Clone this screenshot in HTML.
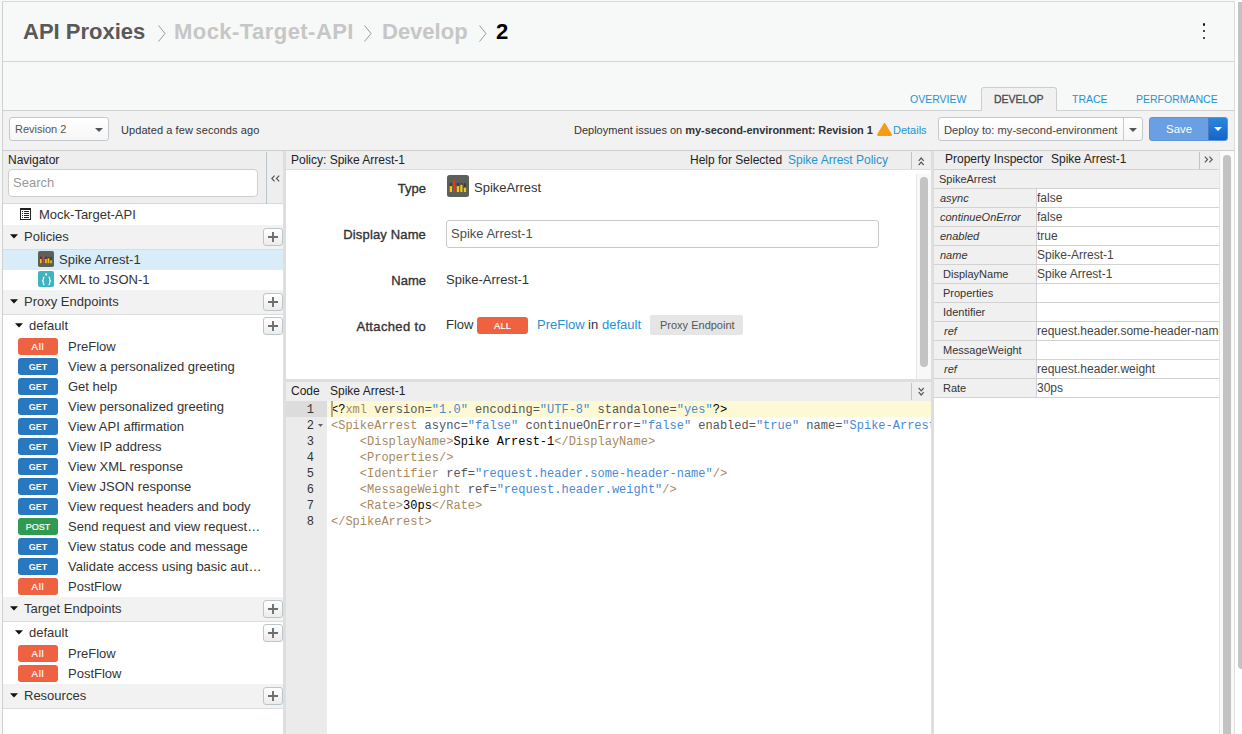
<!DOCTYPE html>
<html><head><meta charset="utf-8"><style>
*{box-sizing:border-box;margin:0;padding:0}
html,body{width:1242px;height:734px;overflow:hidden;background:#fff;font-family:"Liberation Sans",sans-serif;color:#333;position:relative}
.a{position:absolute}
.t{white-space:nowrap}
.plus{width:20px;height:18px;border:1px solid #b9c6cd;border-radius:3px;background:linear-gradient(#fff,#ececec)}
.badge{position:absolute;width:40px;height:17px;border-radius:3px;color:#fff;text-align:center;white-space:nowrap}
.mono{font-family:"Liberation Mono",monospace}
</style></head><body>
<div class="a" style="left:0px;top:0px;width:2px;height:734px;background:#f6f8f8"></div>
<div class="a" style="left:0px;top:0px;width:1238px;height:1px;background:#f8f9f9"></div>
<div class="a" style="left:2px;top:1px;width:1233px;height:733px;border-top:1px solid #d6d8d8;border-left:1px solid #cfd1d1;border-right:1px solid #dcdcdc"></div>
<div class="a" style="left:1238px;top:2px;width:4px;height:667px;background:#c3c3c3;border-radius:0 0 0 4px"></div>
<div class="a" style="left:3px;top:2px;width:1231px;height:60px;background:#f7f8f8;border-bottom:1px solid #d4d6d6"></div>
<div class="a t" style="left:23px;top:16.88px;font-size:22px;line-height:29px;color:#595959;font-weight:bold;font-style:normal;">API Proxies</div>
<svg class="a" style="left:158px;top:25px" width="8" height="17" viewBox="0 0 8 17"><path d="M0.5 0.5 L7 8.5 L0.5 16.5" fill="none" stroke="#9a9a9a" stroke-width="1"/></svg>
<div class="a t" style="left:174px;top:16.88px;font-size:22px;line-height:29px;color:#c6c6c6;font-weight:bold;font-style:normal;letter-spacing:0.45px">Mock-Target-API</div>
<svg class="a" style="left:364px;top:25px" width="8" height="17" viewBox="0 0 8 17"><path d="M0.5 0.5 L7 8.5 L0.5 16.5" fill="none" stroke="#9a9a9a" stroke-width="1"/></svg>
<div class="a t" style="left:382px;top:16.88px;font-size:22px;line-height:29px;color:#c6c6c6;font-weight:bold;font-style:normal;">Develop</div>
<svg class="a" style="left:479px;top:25px" width="8" height="17" viewBox="0 0 8 17"><path d="M0.5 0.5 L7 8.5 L0.5 16.5" fill="none" stroke="#9a9a9a" stroke-width="1"/></svg>
<div class="a t" style="left:496px;top:16.88px;font-size:22px;line-height:29px;color:#000;font-weight:bold;font-style:normal;">2</div>
<div class="a" style="left:1202.8px;top:23.1px;width:2.7px;height:2.7px;border-radius:50%;background:#111"></div>
<div class="a" style="left:1202.8px;top:29.8px;width:2.7px;height:2.7px;border-radius:50%;background:#111"></div>
<div class="a" style="left:1202.8px;top:36.5px;width:2.7px;height:2.7px;border-radius:50%;background:#111"></div>
<div class="a" style="left:3px;top:62px;width:1231px;height:49px;background:#f7f8f8;border-bottom:1px solid #cfd1d1"></div>
<div class="a t" style="left:910px;top:92.36px;font-size:10.5px;line-height:14px;color:#2394d3;font-weight:normal;font-style:normal;">OVERVIEW</div>
<div class="a" style="left:981px;top:87px;width:76px;height:24px;background:#f1f1f1;border:1px solid #cdcdcd;border-bottom:none;border-radius:3px 3px 0 0"></div>
<div class="a t" style="left:994px;top:92.36px;font-size:10.5px;line-height:14px;color:#4a4a4a;font-weight:normal;font-style:normal;-webkit-text-stroke:0.3px #4a4a4a">DEVELOP</div>
<div class="a t" style="left:1072px;top:92.36px;font-size:10.5px;line-height:14px;color:#2394d3;font-weight:normal;font-style:normal;">TRACE</div>
<div class="a t" style="left:1136px;top:92.36px;font-size:10.5px;line-height:14px;color:#2394d3;font-weight:normal;font-style:normal;">PERFORMANCE</div>
<div class="a" style="left:3px;top:111px;width:1231px;height:40px;background:#f2f2f2;border-bottom:1px solid #cdcdcd"></div>
<div class="a" style="left:9px;top:117px;width:100px;height:24px;background:linear-gradient(#fff,#f6f6f6);border:1px solid #c3c9cc;border-radius:3px"></div>
<div class="a t" style="left:15px;top:122.19px;font-size:11px;line-height:14px;color:#555;font-weight:normal;font-style:normal;">Revision 2</div>
<svg class="a" style="left:95px;top:128px" width="8" height="4" viewBox="0 0 8 4"><path d="M0 0 L8 0 L4.0 4 Z" fill="#555"/></svg>
<div class="a t" style="left:121px;top:123.19px;font-size:11px;line-height:14px;color:#333;font-weight:normal;font-style:normal;letter-spacing:0.08px">Updated a few seconds ago</div>
<div class="a t" style="left:574px;top:123.19px;font-size:11px;line-height:14px;color:#333;font-weight:normal;font-style:normal;">Deployment issues on <b style="letter-spacing:-0.06px">my-second-environment: Revision 1</b></div>
<svg class="a" style="left:876.5px;top:122.5px" width="15" height="13" viewBox="0 0 15 13"><path d="M7.5 1.2 L13.8 11.8 L1.2 11.8 Z" fill="#f69b14" stroke="#f69b14" stroke-width="2.2" stroke-linejoin="round"/></svg>
<div class="a t" style="left:893px;top:123.19px;font-size:11px;line-height:14px;color:#2394d3;font-weight:normal;font-style:normal;">Details</div>
<div class="a" style="left:938px;top:117px;width:205px;height:24px;background:linear-gradient(#fff,#f6f6f6);border:1px solid #c3c9cc;border-radius:3px"></div>
<div class="a t" style="left:944px;top:122.62px;font-size:11.2px;line-height:15px;color:#444;font-weight:normal;font-style:normal;">Deploy to: my-second-environment</div>
<div class="a" style="left:1123px;top:118px;width:1px;height:22px;background:#c9c9c9"></div>
<svg class="a" style="left:1129px;top:128px" width="8" height="4" viewBox="0 0 8 4"><path d="M0 0 L8 0 L4.0 4 Z" fill="#555"/></svg>
<div class="a" style="left:1149px;top:117px;width:79px;height:24px;border-radius:3px;background:#6b9fe3;border:1px solid #5f93d6"></div>
<div class="a" style="left:1208px;top:118px;width:19px;height:22px;background:linear-gradient(#2a86e0,#1565c8);border-left:1px solid #4b7cc0;border-radius:0 2px 2px 0"></div>
<div class="a t" style="left:1166px;top:121.52px;font-size:11.5px;line-height:15px;color:#fff;font-weight:normal;font-style:normal;">Save</div>
<svg class="a" style="left:1214px;top:127px" width="8" height="4" viewBox="0 0 8 4"><path d="M0 0 L8 0 L4.0 4 Z" fill="#fff"/></svg>
<div class="a" style="left:283px;top:151px;width:3px;height:583px;background:#dedede"></div>
<div class="a" style="left:931px;top:151px;width:3px;height:583px;background:#dedede"></div>
<div class="a" style="left:3px;top:151px;width:280px;height:53px;background:#eeeeee;border-bottom:1px solid #d9d9d9"></div>
<div class="a t" style="left:8px;top:151.84px;font-size:12px;line-height:16px;color:#222;font-weight:normal;font-style:normal;">Navigator</div>
<div class="a" style="left:8px;top:169px;width:250px;height:28px;background:#fff;border:1px solid #cfcfcf;border-radius:4px"></div>
<div class="a t" style="left:13px;top:174.00px;font-size:13px;line-height:17px;color:#999;font-weight:normal;font-style:normal;">Search</div>
<div class="a" style="left:266px;top:152px;width:1px;height:52px;background:#b9c6cd"></div>
<svg class="a" style="left:270.5px;top:174.5px" width="9" height="7" viewBox="0 0 9 7"><path d="M3.6 0.6 L0.8 3.5 L3.6 6.4 M8.2 0.6 L5.4 3.5 L8.2 6.4" fill="none" stroke="#555" stroke-width="1.15"/></svg>
<svg class="a" style="left:20px;top:208px" width="11" height="12" viewBox="0 0 11 12"><rect x="0.5" y="0.5" width="10" height="11" fill="#fff" stroke="#222"/><rect x="0" y="0" width="11" height="2" fill="#222"/><path d="M2 3.5h1M4 3.5h5M2 5.5h1M4 5.5h5M2 7.5h1M4 7.5h5M2 9.5h1M4 9.5h5" stroke="#222" stroke-width="1"/></svg>
<div class="a t" style="left:39px;top:206.00px;font-size:13px;line-height:17px;color:#333;font-weight:normal;font-style:normal;">Mock-Target-API</div>
<div class="a" style="left:3px;top:225px;width:280px;height:25px;background:#f2f2f2;border-bottom:1px solid #dcdcdc"></div>
<svg class="a" style="left:10px;top:234px" width="8" height="5" viewBox="0 0 8 5"><path d="M0 0.2 L8 0.2 L4 4.6 Z" fill="#111"/></svg>
<div class="a t" style="left:24px;top:228.00px;font-size:13px;line-height:17px;color:#333;font-weight:normal;font-style:normal;">Policies</div>
<div class="a plus" style="left:263px;top:228px"><svg width="20" height="18" viewBox="0 0 20 18" style="position:absolute;left:-1px;top:-1px"><path d="M5 9 H15 M10 4 V14" stroke="#6e6e6e" stroke-width="1.9"/></svg></div>
<div class="a" style="left:3px;top:250px;width:280px;height:20px;background:#d8edf8"></div>
<svg class="a" style="left:38px;top:251px" width="16" height="16" viewBox="0 0 22 22"><rect x="0" y="0" width="22" height="22" rx="2.5" fill="#5b6158"/><rect x="2.7" y="7.7" width="2.3" height="9.3" rx="1" fill="#3b3f3c"/><rect x="2.7" y="10.9" width="2.3" height="6.1" rx="0.6" fill="#f7c51e"/><rect x="6.2" y="4.3" width="2.3" height="12.7" rx="1" fill="#3b3f3c"/><rect x="6.2" y="4.3" width="2.3" height="12.7" rx="0.6" fill="#ee3a16"/><rect x="9.8" y="7.7" width="2.3" height="9.3" rx="1" fill="#3b3f3c"/><rect x="9.8" y="10.9" width="2.3" height="6.1" rx="0.6" fill="#f7c51e"/><rect x="13.2" y="8" width="2.3" height="9" rx="1" fill="#3b3f3c"/><rect x="13.2" y="9.8" width="2.3" height="7.199999999999999" rx="0.6" fill="#f7c51e"/><rect x="16.8" y="7.9" width="2.3" height="9.1" rx="1" fill="#3b3f3c"/><rect x="16.8" y="12.6" width="2.3" height="4.4" rx="0.6" fill="#f7c51e"/></svg>
<div class="a t" style="left:59px;top:251.00px;font-size:13px;line-height:17px;color:#333;font-weight:normal;font-style:normal;">Spike Arrest-1</div>
<svg class="a" style="left:38px;top:271px" width="16" height="16" viewBox="0 0 16 16"><rect x="0" y="0" width="16" height="16" rx="2" fill="#3cb4c2"/><path d="M6.6 6 C5.2 6 5.2 6.5 5.2 7.8 V8.8 C5.2 9.3 4.7 9.6 4 9.6 C4.7 9.6 5.2 9.9 5.2 10.4 V12 C5.2 13.3 5.2 13.8 6.6 13.8 M10.4 6 C11.8 6 11.8 6.5 11.8 7.8 V8.8 C11.8 9.3 12.3 9.6 13 9.6 C12.3 9.6 11.8 9.9 11.8 10.4 V12 C11.8 13.3 11.8 13.8 10.4 13.8" fill="none" stroke="#fff" stroke-width="1.1"/><circle cx="8.2" cy="3.4" r="1.1" fill="#fff"/></svg>
<div class="a t" style="left:59px;top:271.00px;font-size:13px;line-height:17px;color:#333;font-weight:normal;font-style:normal;">XML to JSON-1</div>
<div class="a" style="left:3px;top:290px;width:280px;height:25px;background:#f2f2f2;border-bottom:1px solid #dcdcdc"></div>
<svg class="a" style="left:10px;top:299px" width="8" height="5" viewBox="0 0 8 5"><path d="M0 0.2 L8 0.2 L4 4.6 Z" fill="#111"/></svg>
<div class="a t" style="left:24px;top:293.00px;font-size:13px;line-height:17px;color:#333;font-weight:normal;font-style:normal;">Proxy Endpoints</div>
<div class="a plus" style="left:263px;top:293px"><svg width="20" height="18" viewBox="0 0 20 18" style="position:absolute;left:-1px;top:-1px"><path d="M5 9 H15 M10 4 V14" stroke="#6e6e6e" stroke-width="1.9"/></svg></div>
<svg class="a" style="left:15px;top:322.5px" width="8" height="5" viewBox="0 0 8 5"><path d="M0 0.2 L8 0.2 L4 4.6 Z" fill="#111"/></svg>
<div class="a t" style="left:29px;top:317.00px;font-size:13px;line-height:17px;color:#333;font-weight:normal;font-style:normal;">default</div>
<div class="a plus" style="left:263px;top:317px"><svg width="20" height="18" viewBox="0 0 20 18" style="position:absolute;left:-1px;top:-1px"><path d="M5 9 H15 M10 4 V14" stroke="#6e6e6e" stroke-width="1.9"/></svg></div>
<div class="badge" style="left:18px;top:338px;background:#ee6242;font-size:9.5px;line-height:17px;font-weight:normal;letter-spacing:0.8px;-webkit-text-stroke:0.2px #fff">All</div>
<div class="a t" style="left:68px;top:338.00px;font-size:13px;line-height:17px;color:#333;font-weight:normal;font-style:normal;">PreFlow</div>
<div class="badge" style="left:18px;top:358px;background:#2877bf;font-size:9px;line-height:18px;font-weight:bold;letter-spacing:0px;-webkit-text-stroke:0px #fff">GET</div>
<div class="a t" style="left:68px;top:358.00px;font-size:13px;line-height:17px;color:#333;font-weight:normal;font-style:normal;">View a personalized greeting</div>
<div class="badge" style="left:18px;top:378px;background:#2877bf;font-size:9px;line-height:18px;font-weight:bold;letter-spacing:0px;-webkit-text-stroke:0px #fff">GET</div>
<div class="a t" style="left:68px;top:378.00px;font-size:13px;line-height:17px;color:#333;font-weight:normal;font-style:normal;">Get help</div>
<div class="badge" style="left:18px;top:398px;background:#2877bf;font-size:9px;line-height:18px;font-weight:bold;letter-spacing:0px;-webkit-text-stroke:0px #fff">GET</div>
<div class="a t" style="left:68px;top:398.00px;font-size:13px;line-height:17px;color:#333;font-weight:normal;font-style:normal;">View personalized greeting</div>
<div class="badge" style="left:18px;top:418px;background:#2877bf;font-size:9px;line-height:18px;font-weight:bold;letter-spacing:0px;-webkit-text-stroke:0px #fff">GET</div>
<div class="a t" style="left:68px;top:418.00px;font-size:13px;line-height:17px;color:#333;font-weight:normal;font-style:normal;">View API affirmation</div>
<div class="badge" style="left:18px;top:438px;background:#2877bf;font-size:9px;line-height:18px;font-weight:bold;letter-spacing:0px;-webkit-text-stroke:0px #fff">GET</div>
<div class="a t" style="left:68px;top:438.00px;font-size:13px;line-height:17px;color:#333;font-weight:normal;font-style:normal;">View IP address</div>
<div class="badge" style="left:18px;top:458px;background:#2877bf;font-size:9px;line-height:18px;font-weight:bold;letter-spacing:0px;-webkit-text-stroke:0px #fff">GET</div>
<div class="a t" style="left:68px;top:458.00px;font-size:13px;line-height:17px;color:#333;font-weight:normal;font-style:normal;">View XML response</div>
<div class="badge" style="left:18px;top:478px;background:#2877bf;font-size:9px;line-height:18px;font-weight:bold;letter-spacing:0px;-webkit-text-stroke:0px #fff">GET</div>
<div class="a t" style="left:68px;top:478.00px;font-size:13px;line-height:17px;color:#333;font-weight:normal;font-style:normal;">View JSON response</div>
<div class="badge" style="left:18px;top:498px;background:#2877bf;font-size:9px;line-height:18px;font-weight:bold;letter-spacing:0px;-webkit-text-stroke:0px #fff">GET</div>
<div class="a t" style="left:68px;top:498.00px;font-size:13px;line-height:17px;color:#333;font-weight:normal;font-style:normal;">View request headers and body</div>
<div class="badge" style="left:18px;top:518px;background:#2f9b50;font-size:9px;line-height:18px;font-weight:normal;letter-spacing:0px;-webkit-text-stroke:0.2px #fff">POST</div>
<div class="a t" style="left:68px;top:518.00px;font-size:13px;line-height:17px;color:#333;font-weight:normal;font-style:normal;">Send request and view request…</div>
<div class="badge" style="left:18px;top:538px;background:#2877bf;font-size:9px;line-height:18px;font-weight:bold;letter-spacing:0px;-webkit-text-stroke:0px #fff">GET</div>
<div class="a t" style="left:68px;top:538.00px;font-size:13px;line-height:17px;color:#333;font-weight:normal;font-style:normal;">View status code and message</div>
<div class="badge" style="left:18px;top:558px;background:#2877bf;font-size:9px;line-height:18px;font-weight:bold;letter-spacing:0px;-webkit-text-stroke:0px #fff">GET</div>
<div class="a t" style="left:68px;top:558.00px;font-size:13px;line-height:17px;color:#333;font-weight:normal;font-style:normal;">Validate access using basic aut…</div>
<div class="badge" style="left:18px;top:578px;background:#ee6242;font-size:9.5px;line-height:17px;font-weight:normal;letter-spacing:0.8px;-webkit-text-stroke:0.2px #fff">All</div>
<div class="a t" style="left:68px;top:578.00px;font-size:13px;line-height:17px;color:#333;font-weight:normal;font-style:normal;">PostFlow</div>
<div class="a" style="left:3px;top:597px;width:280px;height:25px;background:#f2f2f2;border-bottom:1px solid #dcdcdc"></div>
<svg class="a" style="left:10px;top:606px" width="8" height="5" viewBox="0 0 8 5"><path d="M0 0.2 L8 0.2 L4 4.6 Z" fill="#111"/></svg>
<div class="a t" style="left:24px;top:600.00px;font-size:13px;line-height:17px;color:#333;font-weight:normal;font-style:normal;">Target Endpoints</div>
<div class="a plus" style="left:263px;top:600px"><svg width="20" height="18" viewBox="0 0 20 18" style="position:absolute;left:-1px;top:-1px"><path d="M5 9 H15 M10 4 V14" stroke="#6e6e6e" stroke-width="1.9"/></svg></div>
<svg class="a" style="left:15px;top:629.5px" width="8" height="5" viewBox="0 0 8 5"><path d="M0 0.2 L8 0.2 L4 4.6 Z" fill="#111"/></svg>
<div class="a t" style="left:29px;top:624.00px;font-size:13px;line-height:17px;color:#333;font-weight:normal;font-style:normal;">default</div>
<div class="a plus" style="left:263px;top:624px"><svg width="20" height="18" viewBox="0 0 20 18" style="position:absolute;left:-1px;top:-1px"><path d="M5 9 H15 M10 4 V14" stroke="#6e6e6e" stroke-width="1.9"/></svg></div>
<div class="badge" style="left:18px;top:645px;background:#ee6242;font-size:9.5px;line-height:17px;font-weight:normal;letter-spacing:0.8px;-webkit-text-stroke:0.2px #fff">All</div>
<div class="a t" style="left:68px;top:645.00px;font-size:13px;line-height:17px;color:#333;font-weight:normal;font-style:normal;">PreFlow</div>
<div class="badge" style="left:18px;top:665px;background:#ee6242;font-size:9.5px;line-height:17px;font-weight:normal;letter-spacing:0.8px;-webkit-text-stroke:0.2px #fff">All</div>
<div class="a t" style="left:68px;top:665.00px;font-size:13px;line-height:17px;color:#333;font-weight:normal;font-style:normal;">PostFlow</div>
<div class="a" style="left:3px;top:684px;width:280px;height:25px;background:#f2f2f2;border-bottom:1px solid #dcdcdc"></div>
<svg class="a" style="left:10px;top:693px" width="8" height="5" viewBox="0 0 8 5"><path d="M0 0.2 L8 0.2 L4 4.6 Z" fill="#111"/></svg>
<div class="a t" style="left:24px;top:687.00px;font-size:13px;line-height:17px;color:#333;font-weight:normal;font-style:normal;">Resources</div>
<div class="a plus" style="left:263px;top:687px"><svg width="20" height="18" viewBox="0 0 20 18" style="position:absolute;left:-1px;top:-1px"><path d="M5 9 H15 M10 4 V14" stroke="#6e6e6e" stroke-width="1.9"/></svg></div>
<div class="a" style="left:286px;top:151px;width:645px;height:19px;background:#eeeeee;border-bottom:1px solid #dedede"></div>
<div class="a t" style="left:291px;top:151.84px;font-size:12px;line-height:16px;color:#222;font-weight:normal;font-style:normal;">Policy: Spike Arrest-1</div>
<div class="a t" style="left:690px;top:151.84px;font-size:12px;line-height:16px;color:#222;font-weight:normal;font-style:normal;">Help for Selected</div>
<div class="a t" style="left:788px;top:151.84px;font-size:12px;line-height:16px;color:#2394d3;font-weight:normal;font-style:normal;">Spike Arrest Policy</div>
<div class="a" style="left:911px;top:152px;width:1px;height:17px;background:#b9c6cd"></div>
<svg class="a" style="left:917.5px;top:156.5px" width="7" height="9" viewBox="0 0 7 9"><path d="M0.7 3.9 L3.2 1 L5.7 3.9 M0.7 8 L3.2 5.1 L5.7 8" fill="none" stroke="#555" stroke-width="1.15"/></svg>
<div class="a t" style="right:816px;top:180.00px;font-size:13px;line-height:17px;color:#333;font-weight:normal;font-style:normal;-webkit-text-stroke:0.35px #333">Type</div>
<svg class="a" style="left:447px;top:175px" width="22" height="22" viewBox="0 0 22 22"><rect x="0" y="0" width="22" height="22" rx="2.5" fill="#5b6158"/><rect x="2.7" y="7.7" width="2.3" height="9.3" rx="1" fill="#3b3f3c"/><rect x="2.7" y="10.9" width="2.3" height="6.1" rx="0.6" fill="#f7c51e"/><rect x="6.2" y="4.3" width="2.3" height="12.7" rx="1" fill="#3b3f3c"/><rect x="6.2" y="4.3" width="2.3" height="12.7" rx="0.6" fill="#ee3a16"/><rect x="9.8" y="7.7" width="2.3" height="9.3" rx="1" fill="#3b3f3c"/><rect x="9.8" y="10.9" width="2.3" height="6.1" rx="0.6" fill="#f7c51e"/><rect x="13.2" y="8" width="2.3" height="9" rx="1" fill="#3b3f3c"/><rect x="13.2" y="9.8" width="2.3" height="7.199999999999999" rx="0.6" fill="#f7c51e"/><rect x="16.8" y="7.9" width="2.3" height="9.1" rx="1" fill="#3b3f3c"/><rect x="16.8" y="12.6" width="2.3" height="4.4" rx="0.6" fill="#f7c51e"/></svg>
<div class="a t" style="left:474px;top:179.00px;font-size:13px;line-height:17px;color:#333;font-weight:normal;font-style:normal;">SpikeArrest</div>
<div class="a t" style="right:816px;top:226.00px;font-size:13px;line-height:17px;color:#333;font-weight:normal;font-style:normal;-webkit-text-stroke:0.35px #333;letter-spacing:0.15px">Display Name</div>
<div class="a" style="left:446px;top:220px;width:433px;height:28px;background:#fff;border:1px solid #c8c8c8;border-radius:3px"></div>
<div class="a t" style="left:451px;top:225.00px;font-size:13px;line-height:17px;color:#4d4d4d;font-weight:normal;font-style:normal;">Spike Arrest-1</div>
<div class="a t" style="right:816px;top:272.00px;font-size:13px;line-height:17px;color:#333;font-weight:normal;font-style:normal;-webkit-text-stroke:0.35px #333">Name</div>
<div class="a t" style="left:446px;top:271.00px;font-size:13px;line-height:17px;color:#333;font-weight:normal;font-style:normal;">Spike-Arrest-1</div>
<div class="a t" style="right:816px;top:318.00px;font-size:13px;line-height:17px;color:#333;font-weight:normal;font-style:normal;-webkit-text-stroke:0.35px #333;letter-spacing:0.35px">Attached to</div>
<div class="a t" style="left:446px;top:316.00px;font-size:13px;line-height:17px;color:#333;font-weight:normal;font-style:normal;">Flow</div>
<div class="badge" style="left:477px;top:317px;width:51px;height:17px;background:#ee6242;font-size:9.5px;line-height:18px;-webkit-text-stroke:0.2px #fff">ALL</div>
<div class="a t" style="left:537px;top:316.00px;font-size:13px;line-height:17px;color:#2394d3;font-weight:normal;font-style:normal;">PreFlow</div>
<div class="a t" style="left:588px;top:316.00px;font-size:13px;line-height:17px;color:#333;font-weight:normal;font-style:normal;">in</div>
<div class="a t" style="left:602px;top:316.00px;font-size:13px;line-height:17px;color:#2394d3;font-weight:normal;font-style:normal;">default</div>
<div class="a" style="left:650px;top:315px;width:93px;height:20px;background:#e5e5e5;border-radius:2px"></div>
<div class="a t" style="left:660px;top:318.19px;font-size:11px;line-height:14px;color:#555;font-weight:normal;font-style:normal;">Proxy Endpoint</div>
<div class="a" style="left:916px;top:174px;width:15px;height:205px;background:#f8f8f8;border-left:1px solid #e6e6e6"></div>
<div class="a" style="left:920px;top:177px;width:8px;height:190px;background:#c3c3c3;border-radius:4px"></div>
<div class="a" style="left:286px;top:379px;width:645px;height:3px;background:#dedede"></div>
<div class="a" style="left:286px;top:382px;width:645px;height:19px;background:#eeeeee"></div>
<div class="a t" style="left:291px;top:382.84px;font-size:12px;line-height:16px;color:#222;font-weight:normal;font-style:normal;">Code</div>
<div class="a t" style="left:330px;top:382.84px;font-size:12px;line-height:16px;color:#222;font-weight:normal;font-style:normal;">Spike Arrest-1</div>
<div class="a" style="left:911px;top:383px;width:1px;height:17px;background:#b9c6cd"></div>
<svg class="a" style="left:917.5px;top:386.5px" width="7" height="9" viewBox="0 0 7 9"><path d="M0.7 1 L3.2 3.9 L5.7 1 M0.7 5.1 L3.2 8 L5.7 5.1" fill="none" stroke="#555" stroke-width="1.15"/></svg>
<div class="a" style="left:286px;top:401px;width:41px;height:333px;background:#ebebeb"></div>
<div class="a" style="left:286px;top:401px;width:41px;height:16px;background:#dcdcdc"></div>
<div class="a" style="left:327px;top:401px;width:604px;height:16px;background:#fdf9d4"></div>
<div class="a" style="left:327px;top:401px;width:604px;height:333px;overflow:hidden">
<div class="a mono" style="white-space:pre;left:4px;top:1px;font-size:12px;line-height:16px;color:#333"><span style="color:#000">&lt;?</span><span style="color:#a8895e">xml</span><span style="color:#555"> version=</span><span style="color:#4a89d4">&quot;1.0&quot;</span><span style="color:#555"> encoding=</span><span style="color:#4a89d4">&quot;UTF-8&quot;</span><span style="color:#555"> standalone=</span><span style="color:#4a89d4">&quot;yes&quot;</span><span style="color:#000">?&gt;</span></div>
<div class="a mono" style="white-space:pre;left:4px;top:17px;font-size:12px;line-height:16px;color:#333"><span style="color:#a8895e">&lt;SpikeArrest</span><span style="color:#555"> async=</span><span style="color:#4a89d4">&quot;false&quot;</span><span style="color:#555"> continueOnError=</span><span style="color:#4a89d4">&quot;false&quot;</span><span style="color:#555"> enabled=</span><span style="color:#4a89d4">&quot;true&quot;</span><span style="color:#555"> name=</span><span style="color:#4a89d4">&quot;Spike-Arrest-1&quot;&gt;</span></div>
<div class="a mono" style="white-space:pre;left:4px;top:33px;font-size:12px;line-height:16px;color:#333">    <span style="color:#a8895e">&lt;DisplayName&gt;</span><span style="color:#000">Spike Arrest-1</span><span style="color:#a8895e">&lt;/DisplayName&gt;</span></div>
<div class="a mono" style="white-space:pre;left:4px;top:49px;font-size:12px;line-height:16px;color:#333">    <span style="color:#a8895e">&lt;Properties/&gt;</span></div>
<div class="a mono" style="white-space:pre;left:4px;top:65px;font-size:12px;line-height:16px;color:#333">    <span style="color:#a8895e">&lt;Identifier</span><span style="color:#555"> ref=</span><span style="color:#4a89d4">&quot;request.header.some-header-name&quot;</span><span style="color:#a8895e">/&gt;</span></div>
<div class="a mono" style="white-space:pre;left:4px;top:81px;font-size:12px;line-height:16px;color:#333">    <span style="color:#a8895e">&lt;MessageWeight</span><span style="color:#555"> ref=</span><span style="color:#4a89d4">&quot;request.header.weight&quot;</span><span style="color:#a8895e">/&gt;</span></div>
<div class="a mono" style="white-space:pre;left:4px;top:97px;font-size:12px;line-height:16px;color:#333">    <span style="color:#a8895e">&lt;Rate&gt;</span><span style="color:#000">30ps</span><span style="color:#a8895e">&lt;/Rate&gt;</span></div>
<div class="a mono" style="white-space:pre;left:4px;top:113px;font-size:12px;line-height:16px;color:#333"><span style="color:#a8895e">&lt;/SpikeArrest&gt;</span></div>
</div>
<div class="a mono t" style="right:928px;top:402px;font-size:12px;line-height:16px;color:#333">1</div>
<div class="a mono t" style="right:928px;top:418px;font-size:12px;line-height:16px;color:#333">2</div>
<div class="a mono t" style="right:928px;top:434px;font-size:12px;line-height:16px;color:#333">3</div>
<div class="a mono t" style="right:928px;top:450px;font-size:12px;line-height:16px;color:#333">4</div>
<div class="a mono t" style="right:928px;top:466px;font-size:12px;line-height:16px;color:#333">5</div>
<div class="a mono t" style="right:928px;top:482px;font-size:12px;line-height:16px;color:#333">6</div>
<div class="a mono t" style="right:928px;top:498px;font-size:12px;line-height:16px;color:#333">7</div>
<div class="a mono t" style="right:928px;top:514px;font-size:12px;line-height:16px;color:#333">8</div>
<svg class="a" style="left:318px;top:424px" width="5" height="3" viewBox="0 0 5 3"><path d="M0 0 L5 0 L2.5 3 Z" fill="#666"/></svg>
<div class="a" style="left:331px;top:401px;width:2px;height:16px;background:#b5ac7e"></div>
<div class="a" style="left:934px;top:151px;width:285px;height:19px;background:#eeeeee;border-bottom:1px solid #d2d2d2"></div>
<div class="a t" style="left:945px;top:150.84px;font-size:12px;line-height:16px;color:#222;font-weight:normal;font-style:normal;">Property Inspector</div>
<div class="a t" style="left:1051px;top:150.84px;font-size:12px;line-height:16px;color:#222;font-weight:normal;font-style:normal;">Spike Arrest-1</div>
<div class="a" style="left:1199px;top:152px;width:1px;height:17px;background:#b9c6cd"></div>
<svg class="a" style="left:1203.5px;top:156px" width="9" height="7" viewBox="0 0 9 7"><path d="M0.8 0.6 L3.6 3.5 L0.8 6.4 M5.4 0.6 L8.2 3.5 L5.4 6.4" fill="none" stroke="#555" stroke-width="1.15"/></svg>
<div class="a" style="left:934px;top:170px;width:285px;height:19px;background:#f0f0f0;border-bottom:1px solid #d2d2d2"></div>
<div class="a t" style="left:939px;top:172.19px;font-size:11px;line-height:14px;color:#333;font-weight:normal;font-style:normal;">SpikeArrest</div>
<div class="a" style="left:934px;top:189px;width:103px;height:19px;background:#f0f0f0;border-bottom:1px solid #d2d2d2;border-right:1px solid #d2d2d2"></div>
<div class="a" style="left:1037px;top:189px;width:182px;height:19px;background:#fff;border-bottom:1px solid #d2d2d2"></div>
<div class="a t" style="left:940px;top:191.19px;font-size:11px;line-height:14px;color:#333;font-weight:normal;font-style:italic;">async</div>
<div class="a" style="left:1037px;top:189px;width:182px;height:18px;overflow:hidden">
<div class="a t" style="left:0px;top:0.84px;font-size:12px;line-height:16px;color:#444">false</div></div>
<div class="a" style="left:934px;top:208px;width:103px;height:19px;background:#f0f0f0;border-bottom:1px solid #d2d2d2;border-right:1px solid #d2d2d2"></div>
<div class="a" style="left:1037px;top:208px;width:182px;height:19px;background:#fff;border-bottom:1px solid #d2d2d2"></div>
<div class="a t" style="left:940px;top:210.19px;font-size:11px;line-height:14px;color:#333;font-weight:normal;font-style:italic;">continueOnError</div>
<div class="a" style="left:1037px;top:208px;width:182px;height:18px;overflow:hidden">
<div class="a t" style="left:0px;top:0.84px;font-size:12px;line-height:16px;color:#444">false</div></div>
<div class="a" style="left:934px;top:227px;width:103px;height:19px;background:#f0f0f0;border-bottom:1px solid #d2d2d2;border-right:1px solid #d2d2d2"></div>
<div class="a" style="left:1037px;top:227px;width:182px;height:19px;background:#fff;border-bottom:1px solid #d2d2d2"></div>
<div class="a t" style="left:940px;top:229.19px;font-size:11px;line-height:14px;color:#333;font-weight:normal;font-style:italic;">enabled</div>
<div class="a" style="left:1037px;top:227px;width:182px;height:18px;overflow:hidden">
<div class="a t" style="left:0px;top:0.84px;font-size:12px;line-height:16px;color:#444">true</div></div>
<div class="a" style="left:934px;top:246px;width:103px;height:19px;background:#f0f0f0;border-bottom:1px solid #d2d2d2;border-right:1px solid #d2d2d2"></div>
<div class="a" style="left:1037px;top:246px;width:182px;height:19px;background:#fff;border-bottom:1px solid #d2d2d2"></div>
<div class="a t" style="left:940px;top:248.19px;font-size:11px;line-height:14px;color:#333;font-weight:normal;font-style:italic;">name</div>
<div class="a" style="left:1037px;top:246px;width:182px;height:18px;overflow:hidden">
<div class="a t" style="left:0px;top:0.84px;font-size:12px;line-height:16px;color:#444">Spike-Arrest-1</div></div>
<div class="a" style="left:934px;top:265px;width:103px;height:19px;background:#f0f0f0;border-bottom:1px solid #d2d2d2;border-right:1px solid #d2d2d2"></div>
<div class="a" style="left:1037px;top:265px;width:182px;height:19px;background:#fff;border-bottom:1px solid #d2d2d2"></div>
<div class="a t" style="left:943px;top:267.19px;font-size:11px;line-height:14px;color:#333;font-weight:normal;font-style:normal;">DisplayName</div>
<div class="a" style="left:1037px;top:265px;width:182px;height:18px;overflow:hidden">
<div class="a t" style="left:0px;top:0.84px;font-size:12px;line-height:16px;color:#444">Spike Arrest-1</div></div>
<div class="a" style="left:934px;top:284px;width:103px;height:19px;background:#f0f0f0;border-bottom:1px solid #d2d2d2;border-right:1px solid #d2d2d2"></div>
<div class="a" style="left:1037px;top:284px;width:182px;height:19px;background:#fff;border-bottom:1px solid #d2d2d2"></div>
<div class="a t" style="left:943px;top:286.19px;font-size:11px;line-height:14px;color:#333;font-weight:normal;font-style:normal;">Properties</div>
<div class="a" style="left:934px;top:303px;width:103px;height:19px;background:#f0f0f0;border-bottom:1px solid #d2d2d2;border-right:1px solid #d2d2d2"></div>
<div class="a" style="left:1037px;top:303px;width:182px;height:19px;background:#fff;border-bottom:1px solid #d2d2d2"></div>
<div class="a t" style="left:943px;top:305.19px;font-size:11px;line-height:14px;color:#333;font-weight:normal;font-style:normal;">Identifier</div>
<div class="a" style="left:934px;top:322px;width:103px;height:19px;background:#f0f0f0;border-bottom:1px solid #d2d2d2;border-right:1px solid #d2d2d2"></div>
<div class="a" style="left:1037px;top:322px;width:182px;height:19px;background:#fff;border-bottom:1px solid #d2d2d2"></div>
<div class="a t" style="left:944px;top:324.19px;font-size:11px;line-height:14px;color:#333;font-weight:normal;font-style:italic;">ref</div>
<div class="a" style="left:1037px;top:322px;width:182px;height:18px;overflow:hidden">
<div class="a t" style="left:0px;top:0.84px;font-size:12px;line-height:16px;color:#444">request.header.some-header-name</div></div>
<div class="a" style="left:934px;top:341px;width:103px;height:19px;background:#f0f0f0;border-bottom:1px solid #d2d2d2;border-right:1px solid #d2d2d2"></div>
<div class="a" style="left:1037px;top:341px;width:182px;height:19px;background:#fff;border-bottom:1px solid #d2d2d2"></div>
<div class="a t" style="left:943px;top:343.19px;font-size:11px;line-height:14px;color:#333;font-weight:normal;font-style:normal;">MessageWeight</div>
<div class="a" style="left:934px;top:360px;width:103px;height:19px;background:#f0f0f0;border-bottom:1px solid #d2d2d2;border-right:1px solid #d2d2d2"></div>
<div class="a" style="left:1037px;top:360px;width:182px;height:19px;background:#fff;border-bottom:1px solid #d2d2d2"></div>
<div class="a t" style="left:944px;top:362.19px;font-size:11px;line-height:14px;color:#333;font-weight:normal;font-style:italic;">ref</div>
<div class="a" style="left:1037px;top:360px;width:182px;height:18px;overflow:hidden">
<div class="a t" style="left:0px;top:0.84px;font-size:12px;line-height:16px;color:#444">request.header.weight</div></div>
<div class="a" style="left:934px;top:379px;width:103px;height:19px;background:#f0f0f0;border-bottom:1px solid #d2d2d2;border-right:1px solid #d2d2d2"></div>
<div class="a" style="left:1037px;top:379px;width:182px;height:19px;background:#fff;border-bottom:1px solid #d2d2d2"></div>
<div class="a t" style="left:943px;top:381.19px;font-size:11px;line-height:14px;color:#333;font-weight:normal;font-style:normal;">Rate</div>
<div class="a" style="left:1037px;top:379px;width:182px;height:18px;overflow:hidden">
<div class="a t" style="left:0px;top:0.84px;font-size:12px;line-height:16px;color:#444">30ps</div></div>
<div class="a" style="left:1219px;top:151px;width:15px;height:583px;background:#fafafa;border-left:1px solid #e6e6e6"></div>
<div class="a" style="left:1223px;top:155px;width:8px;height:600px;background:#c3c3c3;border-radius:4px"></div>
</body></html>
